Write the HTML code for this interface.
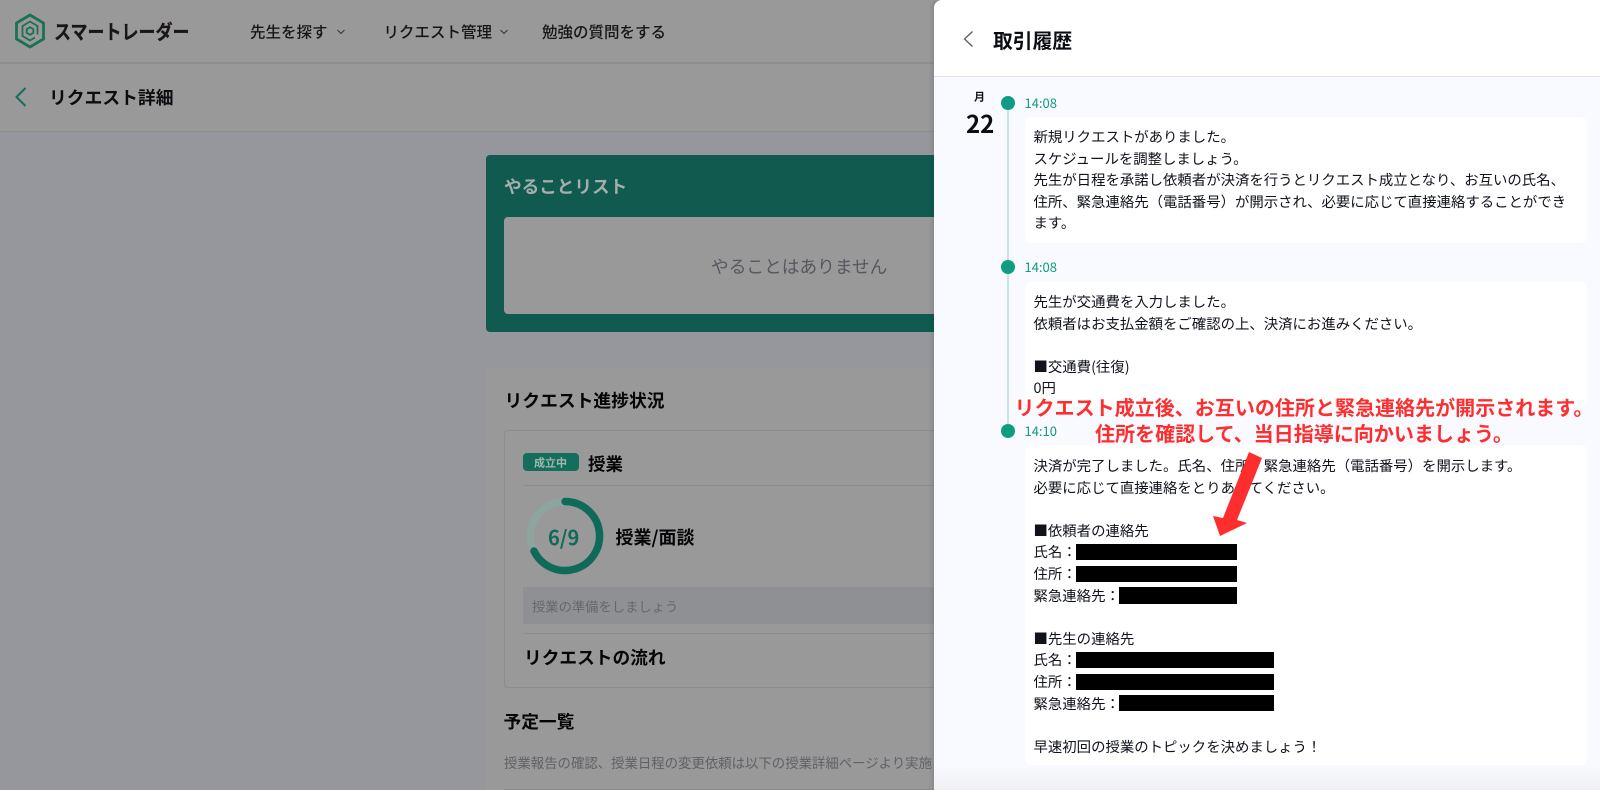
<!DOCTYPE html>
<html lang="ja"><head><meta charset="utf-8"><title>取引履歴</title>
<style>
*{box-sizing:border-box;margin:0;padding:0}
html,body{width:1600px;height:790px;overflow:hidden}
body{position:relative;background:#96979c;font-family:"Liberation Sans","Noto Sans CJK JP",sans-serif;color:#000}
.a{position:absolute;white-space:nowrap}
.t{line-height:1;transform:translateY(-50%)}
.b{font-weight:700}
.cjk{font-family:"Noto Sans CJK JP",sans-serif}
.card{position:absolute;background:#fff;border-radius:6px}
.msg{position:absolute;left:1033.500px;font:14.400px/21.600px "Noto Sans CJK JP",sans-serif;color:#10131c;white-space:nowrap}
.dot{position:absolute;left:1001px;width:14px;height:14px;border-radius:50%;background:#0e9c82}
.time{position:absolute;left:1024.500px;font:13px/16px "Noto Sans CJK JP",sans-serif;color:#139a80}
.k{position:absolute;background:#000}
.red{position:absolute;font:700 20.050px/26px "Noto Sans CJK JP",sans-serif;color:#ff2e2e;white-space:nowrap}
</style></head><body>
<div class="a" style="left:0;top:0;width:934px;height:62px;background:#999"></div>
<div class="a" style="left:0;top:62px;width:934px;height:2px;background:#8e8e8e"></div>
<div class="a" style="left:0;top:64px;width:934px;height:67px;background:#999"></div>
<div class="a" style="left:0;top:131px;width:934px;height:1px;background:#8d8d8d"></div>

<svg class="a" style="left:14px;top:13px" width="32" height="36" viewBox="0 0 32 36" fill="none">
<path d="M16 2 29.500 10V26L16 34 2.500 26V10Z" stroke="#1c7056" stroke-width="2.800"/>
<path d="M23.500 21.500V13L16 8.500 8.500 13V23L16 27.500 21 24.500" stroke="#1c7056" stroke-width="1.800"/>
<path d="M16 14.200 19.300 16.100V19.900L16 21.800 12.700 19.900V16.100Z" stroke="#1c7056" stroke-width="1.800"/>
</svg>
<div class="a b cjk" style="left:54px;top:20px;font-size:20px;line-height:22px;color:#1a1516;transform:scaleX(.85);transform-origin:0 0;-webkit-text-stroke:.25px #1a1516">スマートレーダー</div>
<div class="a t cjk" style="left:250px;top:32px;font-size:15.500px;font-weight:500;color:#15161a">先生を探す</div>
<svg class="a" style="left:336px;top:28px" width="10" height="8" viewBox="0 0 10 8" fill="none"><path d="M1.500 2 5 5.500 8.500 2" stroke="#333" stroke-width="1"/></svg>
<div class="a t cjk" style="left:383.500px;top:32px;font-size:15.500px;font-weight:500;color:#15161a">リクエスト管理</div>
<svg class="a" style="left:499px;top:28px" width="10" height="8" viewBox="0 0 10 8" fill="none"><path d="M1.500 2 5 5.500 8.500 2" stroke="#333" stroke-width="1"/></svg>
<div class="a t cjk" style="left:542px;top:32px;font-size:15.500px;font-weight:500;color:#15161a">勉強の質問をする</div>

<svg class="a" style="left:13px;top:86px" width="16" height="22" viewBox="0 0 16 22" fill="none"><path d="M12.500 2 3.500 11 12.500 20" stroke="#136f5c" stroke-width="2"/></svg>
<div class="a t b cjk" style="left:49px;top:98px;font-size:17.800px;color:#0b0c10">リクエスト詳細</div>

<div class="a" style="left:486px;top:155px;width:448px;height:177px;background:#105a4f;border-radius:4px 0 0 4px"></div>
<div class="a t b cjk" style="left:504px;top:187px;font-size:17.600px;color:#a5aeaa">やることリスト</div>
<div class="a" style="left:504px;top:217px;width:430px;height:97px;background:#999;border-radius:4px 0 0 4px"></div>
<div class="a t cjk" style="left:711px;top:267px;font-size:17.700px;color:#565860">やることはありません</div>

<div class="a" style="left:486px;top:368px;width:448px;height:422px;background:#999;border-radius:4px 0 0 0"></div>
<div class="a t b cjk" style="left:504.500px;top:401px;font-size:17.800px;color:#050507">リクエスト進捗状況</div>
<div class="a" style="left:504px;top:430px;width:440px;height:258px;border:1px solid #8c8c8c;border-radius:4px"></div>
<div class="a" style="left:523px;top:453px;width:56px;height:18px;background:#136f5c;border-radius:4px"></div>
<div class="a t b cjk" style="left:534px;top:462.500px;font-size:11px;color:#a5b6b1">成立中</div>
<div class="a t b cjk" style="left:588px;top:464px;font-size:17.500px;color:#050507">授業</div>
<div class="a" style="left:523px;top:485px;width:411px;height:1px;background:#8c8c8c"></div>
<svg class="a" style="left:524.500px;top:496px" width="80" height="80" viewBox="0 0 80 80" fill="none">
<circle cx="40" cy="40" r="34.500" stroke="#8ea49f" stroke-width="7.500"/>
<path d="M40 5.500A34.500 34.500 0 1 1 9 55" stroke="#0f6a58" stroke-width="7.500" stroke-linecap="round"/>
</svg>
<div class="a t b cjk" style="left:548px;top:537px;font-size:20px;color:#0f6a58">6/9</div>
<div class="a t b cjk" style="left:615.500px;top:537px;font-size:18px;color:#050507">授業/面談</div>
<div class="a" style="left:523px;top:587px;width:411px;height:37px;background:#8f9094"></div>
<div class="a t cjk" style="left:532px;top:606px;font-size:13.300px;color:#65676d">授業の準備をしましょう</div>
<div class="a" style="left:523px;top:633px;width:411px;height:1px;background:#8c8c8c"></div>
<div class="a t b cjk" style="left:524px;top:658px;font-size:17.700px;color:#050507">リクエストの流れ</div>
<div class="a t b cjk" style="left:503.500px;top:721.500px;font-size:17.700px;color:#050507">予定一覧</div>
<div class="a t cjk" style="left:504px;top:762px;font-size:13.400px;color:#5f6167;width:430px;overflow:hidden;line-height:18px">授業報告の確認、授業日程の変更依頼は以下の授業詳細ページより実施</div>
<div class="a" style="left:504px;top:789px;width:430px;height:1px;background:#8c8c8c"></div>

<div class="a" style="left:934px;top:0;width:666px;height:790px;background:linear-gradient(#f9faff 0,#f9faff 765px,#eff0f4 790px);border-radius:8px 0 0 0;box-shadow:-2px 0 5px rgba(0,0,0,.12)"></div>
<div class="a" style="left:934px;top:0;width:666px;height:77px;background:#fff;border-bottom:1px solid #e2e4ec;border-radius:8px 0 0 0"></div>
<svg class="a" style="left:961px;top:29px" width="14" height="20" viewBox="0 0 14 20" fill="none"><path d="M11.500 2.500 3.500 10 11.500 17.500" stroke="#555a66" stroke-width="1.300"/></svg>
<div class="a t b cjk" style="left:993px;top:40px;font-size:19.800px;color:#0b0d14">取引履歴</div>
<div class="a t b cjk" style="left:974px;top:96.500px;font-size:11px;color:#10131c">月</div>
<div class="a t b cjk" style="left:966px;top:122.500px;font-size:24px;color:#0b0d14">22</div>

<div class="a" style="left:1007px;top:103px;width:2px;height:328px;background:#c9e3de"></div>
<div class="dot" style="top:96px"></div>
<div class="time" style="top:95px">14:08</div>
<div class="dot" style="top:260px"></div>
<div class="time" style="top:259px">14:08</div>
<div class="dot" style="top:424px"></div>
<div class="time" style="top:423px">14:10</div>

<div class="card" style="left:1025px;top:117px;width:562px;height:126px"></div>
<div class="msg" style="top:126px">新規リクエストがありました。<br>スケジュールを調整しましょう。<br>先生が日程を承諾し依頼者が決済を行うとリクエスト成立となり、お互いの氏名、<br>住所、緊急連絡先（電話番号）が開示され、必要に応じて直接連絡することができ<br>ます。</div>

<div class="card" style="left:1025px;top:282px;width:562px;height:125px"></div>
<div class="msg" style="top:291px">先生が交通費を入力しました。<br>依頼者はお支払金額をご確認の上、決済にお進みください。<br><br>■交通費(往復)<br>0円</div>

<div class="card" style="left:1025px;top:445px;width:562px;height:320px"></div>
<div class="msg" style="top:455px">決済が完了しました。氏名、住所、緊急連絡先（電話番号）を開示します。<br>必要に応じて直接連絡をとりあってください。<br><br>■依頼者の連絡先<br>氏名：<br>住所：<br>緊急連絡先：<br><br>■先生の連絡先<br>氏名：<br>住所：<br>緊急連絡先：<br><br>早速初回の授業のトピックを決めましょう！</div>
<div class="k" style="left:1076px;top:544px;width:161px;height:16px"></div>
<div class="k" style="left:1076px;top:566px;width:161px;height:16px"></div>
<div class="k" style="left:1119px;top:587px;width:118px;height:16.500px"></div>
<div class="k" style="left:1076px;top:652px;width:197.500px;height:16px"></div>
<div class="k" style="left:1076px;top:673.500px;width:197.500px;height:16.500px"></div>
<div class="k" style="left:1119px;top:694.500px;width:154.500px;height:16.500px"></div>

<div class="red" style="left:1014.500px;top:394px">リクエスト成立後、お互いの住所と緊急連絡先が開示されます。</div>
<div class="red" style="left:1095px;top:420px">住所を確認して、当日指導に向かいましょう。</div>
<svg class="a" style="left:1200px;top:445px" width="70" height="100" viewBox="1200 445 70 100"><polygon points="1249,452 1262,458 1237,520 1247,523 1220,536 1213,516 1223,518" fill="#ff2e2e"/></svg>
</body></html>
